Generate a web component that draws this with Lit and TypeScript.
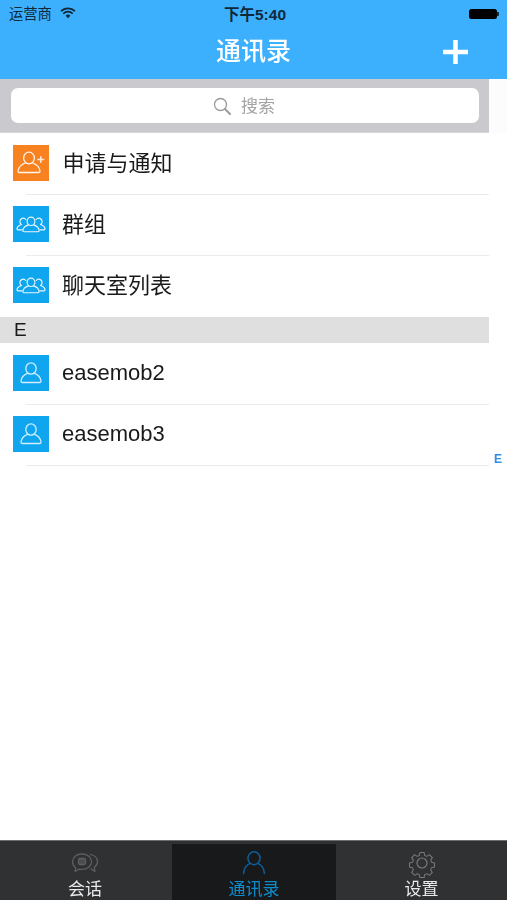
import { LitElement, html, css, svg } from "lit";
import { customElement } from "lit/decorators.js";

const user = (stroke: string) => svg`<g fill="none" stroke="${stroke}" stroke-width="1.300" stroke-linecap="round" stroke-linejoin="round"><ellipse cx="18" cy="13.500" rx="5.200" ry="5.700"/><path d="M14.400 18.300C11 19.700 8.400 22.200 8 26c-.1 1 .5 1.500 1.400 1.500h17.200c.9 0 1.500-.5 1.400-1.500-.4-3.800-3-6.300-6.400-7.700"/></g>`;

const addUser = svg`<g fill="none" stroke="#fff" stroke-opacity=".92" stroke-width="1.300" stroke-linecap="round" stroke-linejoin="round"><ellipse cx="16" cy="13" rx="5.400" ry="5.800"/><path d="M12.200 18C8.500 19.500 5.500 22 5 26c-.1 1 .5 1.500 1.400 1.500h19.200c.9 0 1.500-.5 1.400-1.500-.5-4-3.500-6.500-7.200-8"/></g><path d="M25 14.500h5.600M27.800 11.700v5.600" stroke="#fff" stroke-opacity=".85" stroke-width="1.500" stroke-linecap="round"/>`;

const group = svg`<g transform="translate(0 1)" fill="none" stroke="#fff" stroke-opacity=".9" stroke-width="1.150" stroke-linecap="round" stroke-linejoin="round"><ellipse cx="18" cy="14.300" rx="3.900" ry="4.200"/><path d="M15.400 17.900c-3 1-5.300 2.800-5.500 5.600-.1.800.4 1.200 1 1.200h14.200c.6 0 1.100-.4 1-1.200-.2-2.800-2.500-4.600-5.500-5.600"/><path d="M12.800 12.500a3.300 3.300 0 0 0-5.900 2c0 1.300.6 2.400 1.500 3-2.300.8-4.300 2.300-4.400 4.400 0 .6.300.9.800.9h4.300"/><path d="M23.200 12.500a3.300 3.300 0 0 1 5.900 2c0 1.300-.6 2.400-1.500 3 2.300.8 4.300 2.300 4.400 4.400 0 .6-.3.9-.8.9h-4.300"/></g>`;

const rows1 = [
  { name: "申请与通知", color: "orange", icon: addUser, cls: "first" },
  { name: "群组", color: "", icon: group, cls: "" },
  { name: "聊天室列表", color: "", icon: group, cls: "nosep" },
];
const rows2 = ["easemob2", "easemob3"];

@customElement("app-root")
export class AppRoot extends LitElement {
  static styles = css`
    :host {
      display: block;
      width: 507px;
      height: 900px;
      position: relative;
      overflow: hidden;
      background: #fff;
      font-family: "Liberation Sans", "Noto Sans CJK SC", sans-serif;
      color: #1a1a1a;
    }
    .app { height: 900px; display: flex; flex-direction: column; filter: blur(0.35px); }
    .header { height: 79px; background: #3cb0fd; display: flex; flex-direction: column; flex: none; }
    .status {
      height: 27px;
      display: grid;
      grid-template-columns: 1fr auto 1fr;
      align-items: center;
      padding: 0 8px 0 9px;
      font-size: 14.300px;
      color: #10283a;
    }
    .status-left { display: flex; align-items: center; gap: 8px; }
    .status-left span { margin-bottom: 2px; }
    .status-left svg { margin-bottom: 1px; }
    .time { font-weight: 700; font-size: 15.500px; margin-bottom: 1px; padding-left: 2px; }
    .battery { justify-self: end; display: flex; align-items: center; gap: 0; }
    .battery i { display: block; width: 28px; height: 10px; border-radius: 2.500px; background: #000; }
    .battery b { display: block; width: 2px; height: 4px; background: #10283a; border-radius: 0 1px 1px 0; }
    .nav { flex: 1; position: relative; display: flex; align-items: center; justify-content: center; padding-bottom: 9px; }
    .nav h1 { margin: 0; font-size: 25px; font-weight: 500; color: #fff; }
    .plus { position: absolute; right: 39px; top: 13px; width: 25px; height: 24px; }
    .search-wrap { flex: none; display: flex; height: 54px; background: #fcfcfc; }
    .search-bar { width: 489px; box-sizing: border-box; background: #c9c9ce; padding: 9px 10px 9px 11px; border-bottom: 1px solid #d8d8da; }
    .search {
      height: 100%;
      background: #fff;
      border-radius: 7px;
      display: flex;
      align-items: center;
      justify-content: center;
      gap: 9px;
      padding-right: 2px;
      color: #a3a3a3;
      font-size: 17px;
    }
    .search span { margin-bottom: 3px; }
    .search svg { margin-right: 1px; }
    .list { flex: 1; width: 489px; }
    .row { height: 61px; display: flex; align-items: center; padding: 0 0 1px 13px; box-sizing: border-box; position: relative; font-size: 22px; gap: 13px; }
    .row.first { gap: 13.500px; }
    .row .cn { margin-bottom: 4px; }
    .row::after { content: ""; position: absolute; left: 26px; right: 0; bottom: -1px; height: 1px; background: #ebebeb; }
    .row.nosep::after { display: none; }
    .icon { width: 36px; height: 36px; flex: none; background: #0fa5ef; display: block; }
    .icon.orange { background: #f98220; }
    .section { height: 26px; margin-top: 1px; background: #dfdfdf; font-size: 19px; line-height: 26px; padding-left: 14px; box-sizing: border-box; }
    .index { position: absolute; left: 494px; top: 452px; font-size: 12px; font-weight: 700; color: #2f8de8; line-height: 14px; }
    .tabs {
      flex: none;
      height: 60px;
      box-sizing: border-box;
      background: #2f3133;
      border-top: 1px solid #6b6d6e;
      padding: 3px 0;
      display: grid;
      grid-template-columns: 170px 166px 171px;
    }
    .tab { display: flex; flex-direction: column; align-items: center; color: #e9e9e9; font-size: 17px; line-height: 20px; }
    .tab svg { margin-top: 4px; height: 30px; width: 30px; flex: none; display: block; }
    .tab.active { background: #17191b; color: #0c8dd0; margin-left: 2px; }
    .tab span { margin-top: 2px; }
    .tab .person { margin-top: 6px; height: 26px; width: 26px; }
    .tab .person + span { margin-top: 4px; }
  `;

  render() {
    return html`<div class="app">
      <div class="header">
        <div class="status">
          <div class="status-left">
            <span>运营商</span>
            <svg width="16" height="12" viewBox="0 0 16 12"><path d="M1 4.200a10 10 0 0 1 14 0M3.300 6.600a6.700 6.700 0 0 1 9.400 0" fill="none" stroke="#10283a" stroke-width="1.700"/><path d="M5.600 8.700a3.400 3.400 0 0 1 4.800 0L8 11.300z" fill="#10283a"/></svg>
          </div>
          <span class="time">下午5:40</span>
          <div class="battery"><i></i><b></b></div>
        </div>
        <div class="nav">
          <h1>通讯录</h1>
          <svg class="plus" viewBox="0 0 25 24"><path d="M12.500 0v24M0 12h25" stroke="#fff" stroke-width="4.500"/></svg>
        </div>
      </div>
      <div class="search-wrap">
        <div class="search-bar">
          <div class="search">
            <svg width="18" height="18" viewBox="0 0 18 18" fill="none" stroke="#9a9a9a"><circle cx="7.500" cy="7.500" r="6" stroke-width="1.300"/><path d="M12 12l5 5" stroke-width="2" stroke-linecap="round"/></svg>
            <span>搜索</span>
          </div>
        </div>
      </div>
      <div class="list">
        ${rows1.map(
          (r) => html`<div class="row ${r.cls}">
            <svg class="icon ${r.color}" viewBox="0 0 36 36">${r.icon}</svg>
            <span class="cn">${r.name}</span>
          </div>`
        )}
        <div class="section">E</div>
        ${rows2.map(
          (n) => html`<div class="row">
            <svg class="icon" viewBox="0 0 36 36">${user("#cfeeff")}</svg>
            <span>${n}</span>
          </div>`
        )}
      </div>
      <div class="tabs">
        <div class="tab">
          <svg viewBox="0 0 30 30" fill="none" stroke="#5c5f60" stroke-width="1.300" stroke-linejoin="round">
            <path d="M12 6c-5.500 0-9.500 3.300-9.500 7.700 0 2.500 1.300 4.600 3.300 6l-.8 3.800 4.200-2.400c.9.200 1.800.3 2.800.3 5.500 0 9.500-3.300 9.500-7.700S17.500 6 12 6z"/>
            <path d="M20 6.300c4.300.6 7.500 3.500 7.500 7.200 0 2.400-1.300 4.500-3.300 5.900l.8 4-4.500-2.600"/>
            <rect x="8.500" y="10.500" width="7" height="6" rx="1.500" fill="#4a4c4d"/>
          </svg>
          <span>会话</span>
        </div>
        <div class="tab active">
          <svg class="person" viewBox="0 0 30 30" fill="none" stroke="#0f5f9a" stroke-width="1.700" stroke-linecap="round">
            <ellipse cx="15" cy="9.500" rx="7" ry="7.500"/>
            <path d="M10.500 15.500C6 17.500 3.500 21.500 3 27M19.500 15.500c4.500 2 7 6 7.500 11.500"/>
          </svg>
          <span>通讯录</span>
        </div>
        <div class="tab">
          <svg viewBox="0 0 30 30" fill="none" stroke="#77797a" stroke-width="1.200" stroke-linejoin="round">
            <circle cx="15" cy="15" r="5"/>
            <path d="M12.500 2.500h5l.7 3.500 2.600 1.100 3-2 3.500 3.500-2 3 1.100 2.600 3.500.7v5l-3.500.7-1.100 2.600 2 3-3.500 3.500-3-2-2.600 1.100-.7 3.500h-5l-.7-3.500-2.600-1.100-3 2-3.500-3.500 2-3-1.100-2.600-3.500-.7v-5l3.500-.7 1.100-2.600-2-3 3.500-3.500 3 2 2.600-1.100z" transform="translate(2.400 2.400) scale(.84)"/>
          </svg>
          <span>设置</span>
        </div>
      </div>
      <div class="index">E</div>
    </div>`;
  }
}
